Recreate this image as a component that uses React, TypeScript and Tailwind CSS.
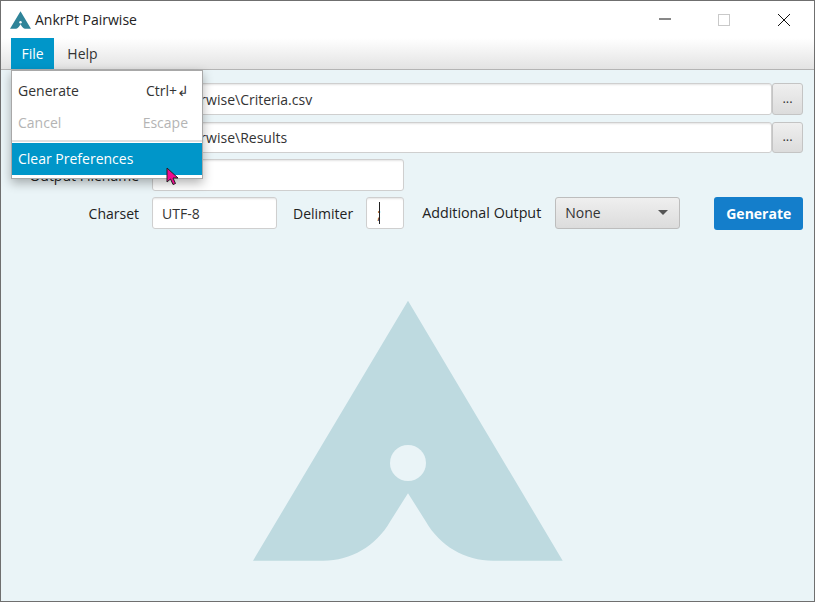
import React from "react";

const FONT = "font-['Open_Sans','Noto_Sans',sans-serif]";

const inputCls =
  "h-full rounded-[3px] border border-[#cfcfcf] bg-white text-[14px] text-[#333] outline-none shadow-[inset_0_2px_2px_-1px_#e4e4e4]";

const Logo: React.FC<{ className: string; fill: string; hole: string }> = ({ className, fill, hole }) => (
  <svg viewBox="253 300 310 261" className={className}>
    <path
      d="M408 300.7 L562.7 560.7 L493 560.7 C465 560.7 440 546 426 521.7 L408 493.3 L390 521.7 C376 546 351 560.7 323.3 560.7 L253 560.7 Z"
      fill={fill}
    />
    <circle cx="408" cy="463" r="18" fill={hole} />
  </svg>
);

const FieldRow: React.FC<{ label: string; value: string; className: string }> = ({ label, value, className }) => (
  <div className={`flex items-stretch ${className}`}>
    <label className="flex w-[127px] shrink-0 items-center justify-end text-[14px] text-[#222]">{label}</label>
    <input readOnly value={value} className={`ml-[13px] min-w-0 flex-1 px-[10px] ${inputCls}`} />
    <button className="w-[31px] shrink-0 rounded-[3px] border border-[#c4c4c4] bg-gradient-to-b from-[#efefef] to-[#dcdcdc] pb-[1px] text-[13px] text-[#333]">
      ...
    </button>
  </div>
);

export default function App() {
  return (
    <div className={`relative flex h-[602px] w-[815px] flex-col overflow-hidden border border-[#6f6f6f] bg-[#eaf4f7] ${FONT}`}>
      <header className="flex h-[37px] shrink-0 items-center bg-white">
        <Logo className="ml-[9px] h-[18px] w-[21px]" fill="#2f8499" hole="#ffffff" />
        <span className="ml-[4px] text-[14px] text-[#222]">AnkrPt Pairwise</span>
        <div className="ml-auto flex items-center">
          <svg viewBox="0 0 14 14" className="mr-[46px] h-[14px] w-[14px]">
            <path d="M1 6 H13" stroke="#111" strokeWidth="1" />
          </svg>
          <div className="mr-[47px] h-[12px] w-[12px] border border-[#c9c9c9]" />
          <svg viewBox="0 0 14 14" className="mr-[23px] h-[14px] w-[14px]">
            <path d="M1 1 L13 13 M13 1 L1 13" stroke="#111" strokeWidth="1" />
          </svg>
        </div>
      </header>

      <nav className="flex h-[32px] shrink-0 border-b border-[#b4b4b4] bg-gradient-to-b from-white to-[#e3e3e3] pl-[10px] text-[14px]">
        <div className="flex w-[43px] items-center justify-center bg-[#0096c9] text-white">File</div>
        <div className="flex w-[57px] items-center justify-center text-[#333]">Help</div>
      </nav>

      <main className="flex flex-1 flex-col pr-[11px] pl-[11px] pt-[13px]">
        <FieldRow label="Criteria File" value="C:\Pairwise\Criteria.csv" className="h-[32px]" />
        <FieldRow label="Output Directory" value="C:\Pairwise\Results" className="mt-[7px] h-[31px]" />
        <div className="mt-[6px] flex h-[32px]">
          <label className="flex w-[127px] shrink-0 items-center justify-end text-[14px] text-[#222]">Output Filename</label>
          <input readOnly value="" className={`ml-[13px] w-[252px] px-[10px] ${inputCls}`} />
        </div>
        <div className="mt-[6px] flex h-[33px] items-stretch">
          <label className="flex w-[127px] shrink-0 items-center justify-end text-[14px] text-[#222]">Charset</label>
          <input readOnly value="UTF-8" className={`ml-[13px] !h-[32px] w-[125px] shrink-0 px-[9px] ${inputCls}`} />
          <label className="ml-[16px] flex h-[32px] shrink-0 items-center text-[14px] text-[#222]">Delimiter</label>
          <div className="relative ml-[13px] h-[32px] w-[38px] shrink-0">
            <input readOnly value=";" className={`w-full px-[10px] ${inputCls}`} />
            <span className="absolute top-[5px] left-[13px] h-[22px] w-px bg-[#222]" />
          </div>
          <label className="ml-[18px] flex h-[32px] shrink-0 items-center text-[14.3px] text-[#222]">Additional Output</label>
          <div className="ml-[14px] flex h-[32px] w-[125px] shrink-0 items-center justify-between rounded-[3px] border border-[#bdbdbd] bg-gradient-to-b from-[#efefef] to-[#dcdcdc] pr-[11px] pl-[9px] pb-[1px] text-[14px] text-[#333]">
            None
            <span className="h-0 w-0 border-x-[5px] border-t-[5px] border-x-transparent border-t-[#555]" />
          </div>
          <button className="ml-[34px] w-[89px] shrink-0 rounded-[3px] bg-[#147ecb] text-[14px] font-bold text-white">Generate</button>
        </div>
        <div className="flex flex-1 justify-center pt-[70px] pl-[1px]">
          <Logo className="h-[261px] w-[310px]" fill="#bedae0" hole="#eaf4f7" />
        </div>
      </main>

      <div className="absolute top-[69px] left-[10px] w-[192px] border border-[#a8a8a8] bg-white pt-[3px] pb-[3px] text-[14px] shadow-[0_4px_10px_rgba(0,0,0,0.3)]">
        <div className="flex h-[32px] items-center justify-between px-[6px] text-[#333]">
          <span>Generate</span>
          <span className="pr-[7px]">Ctrl+↲</span>
        </div>
        <div className="flex h-[32px] items-center justify-between px-[6px] text-[#b4b4b4]">
          <span>Cancel</span>
          <span className="pr-[8px]">Escape</span>
        </div>
        <div className="mt-[2px] mb-[1px] h-[2px] bg-[#e0e0e0]" />
        <div className="flex h-[32px] items-center bg-[#0096c9] px-[6px] pb-[2px] text-white">Clear Preferences</div>
      </div>

      <svg viewBox="0 0 13 19" className="absolute top-[166px] left-[165px] h-[19px] w-[13px]">
        <path d="M1 1 L1 15 L4.5 12 L7 17.5 L9.5 16.5 L7 11 L12 11 Z" fill="#ee0a8f" stroke="#222" strokeWidth="1" />
      </svg>
    </div>
  );
}
